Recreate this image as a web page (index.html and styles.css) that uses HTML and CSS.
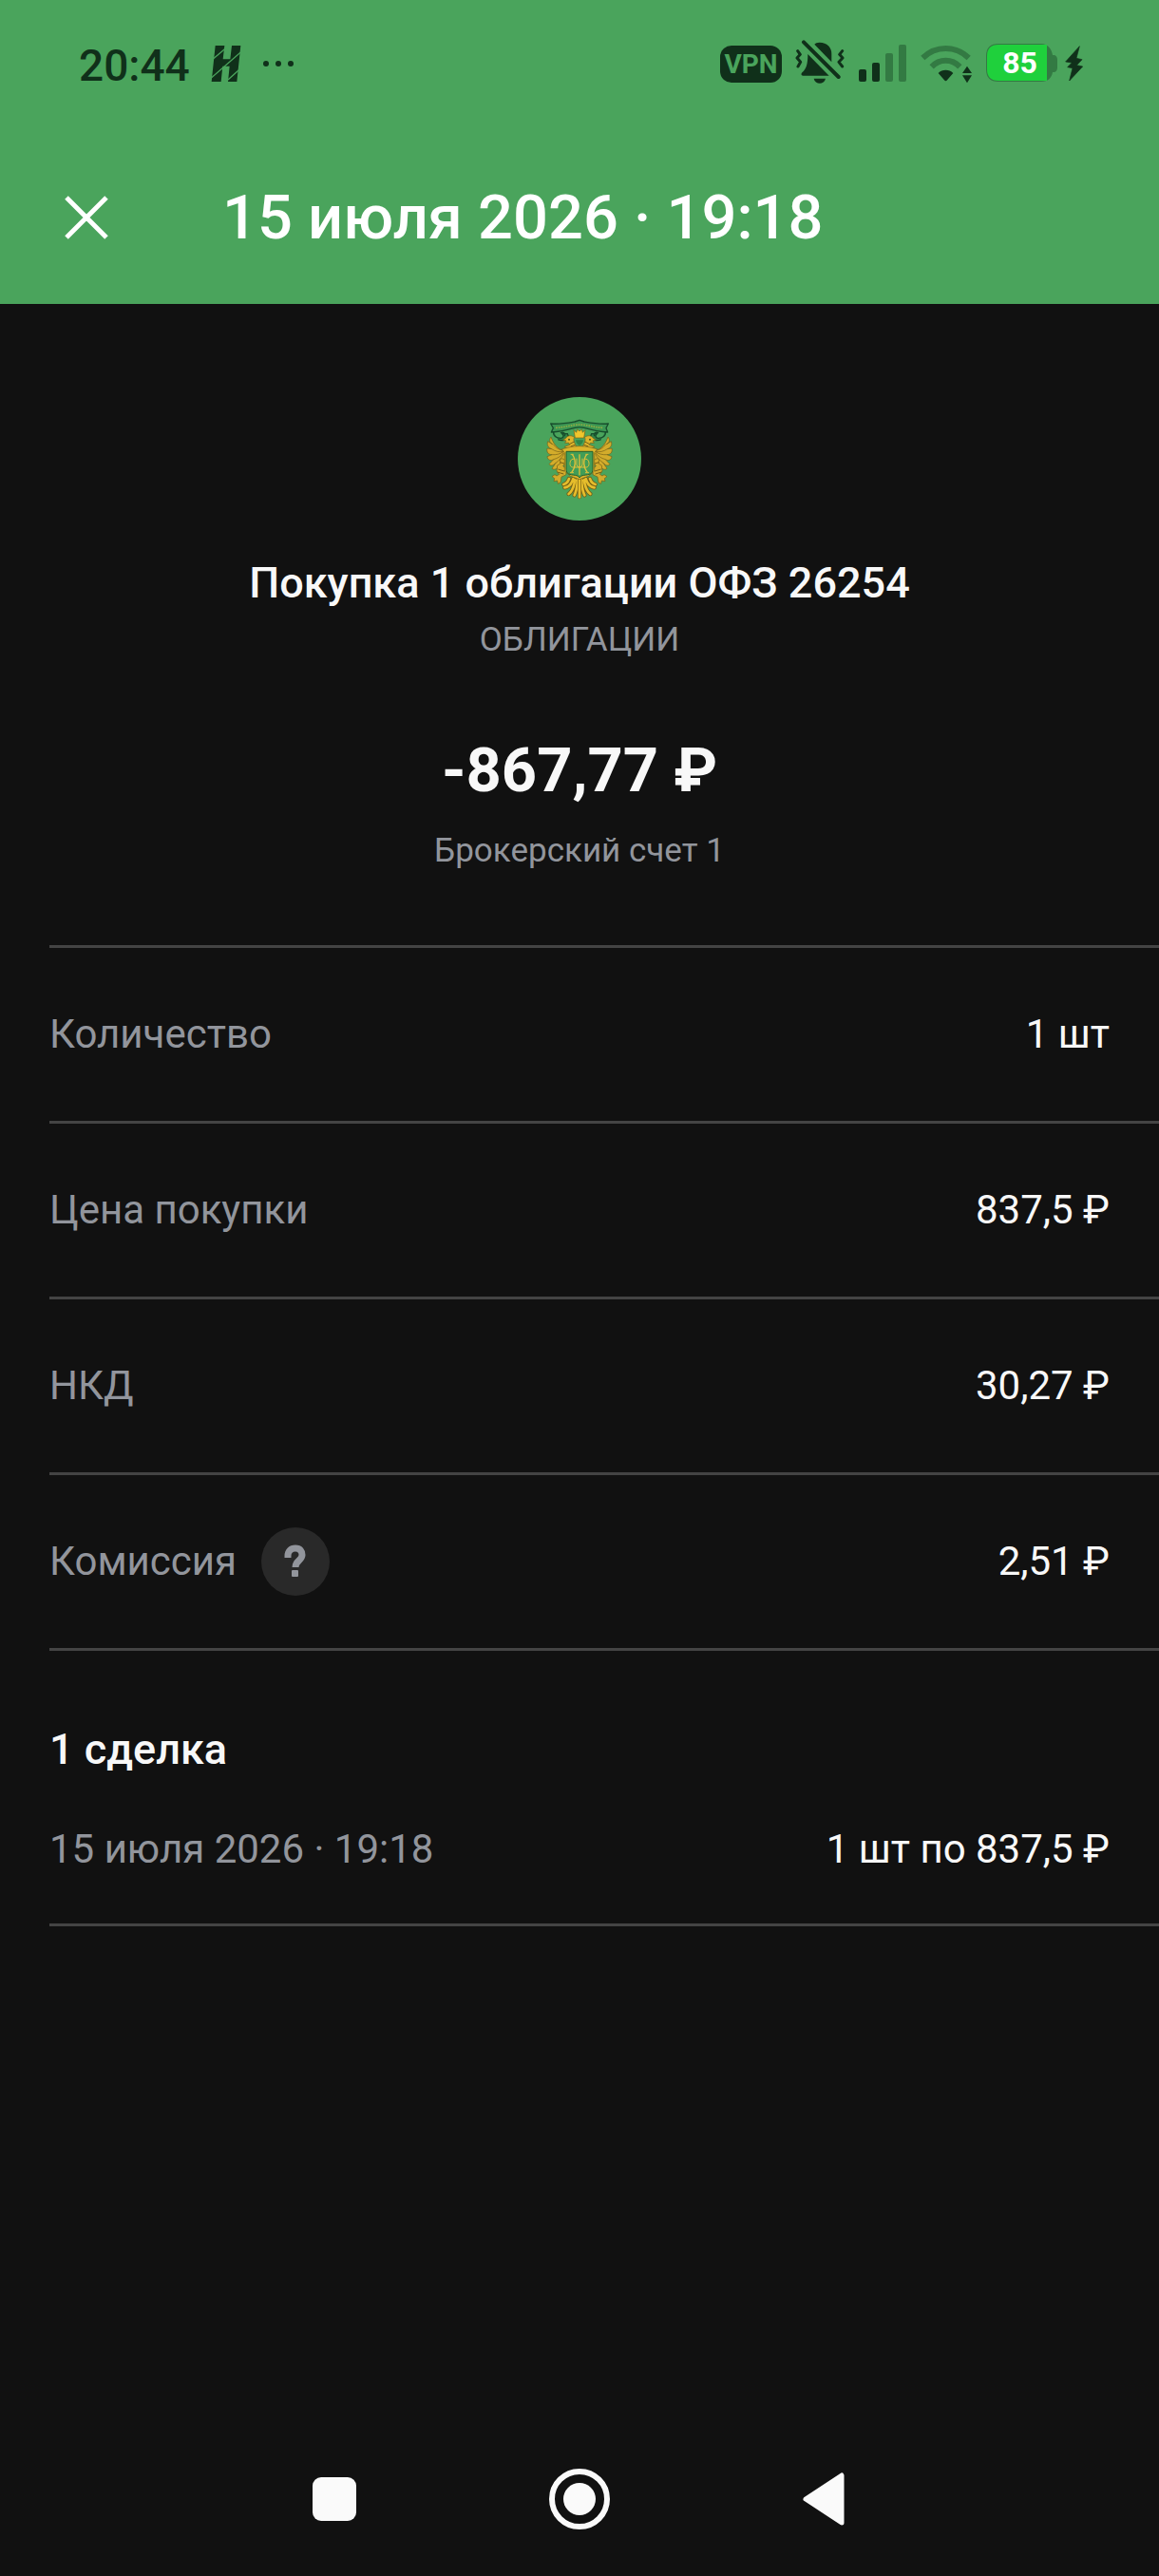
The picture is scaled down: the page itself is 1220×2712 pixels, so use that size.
FILE: index.html
```html
<!DOCTYPE html>
<html lang="ru">
<head>
<meta charset="utf-8">
<meta name="viewport" content="width=device-width, initial-scale=1">
<title>Операция</title>
<link rel="stylesheet" href="styles.css">
</head>
<body>
<header class="top">
  <div class="status">
    <div class="status-left">
      <span class="clock">20:44</span>
      <svg class="h-icon" viewBox="486 66 96 162" aria-hidden="true">
        <path fill="#10301a" d="M500 84h29l-5 43h23l5-43h28l-12 114h-28l5-49h-22l-5 49h-30z"/>
        <path stroke="#4aa45c" stroke-width="4" fill="none" d="M493 126l40-34M487 186l94-82M540 192l40-36"/>
      </svg>
      <svg class="dots" viewBox="0 0 34 54" aria-hidden="true"><g fill="#10301a"><circle cx="4" cy="25" r="3"/><circle cx="17" cy="25" r="3"/><circle cx="30" cy="25" r="3"/></g></svg>
    </div>
    <div class="status-right">
      <span class="vpn">VPN</span>
      <svg class="bell" viewBox="300 66 156 162" aria-hidden="true">
        <g fill="#10301a">
          <path d="M361 80c3-4 8-6 16-6 24 0 38 16 38 36v26z"/>
          <path d="M340 111l67 68h-82c-7 0-7-7-2-11 12-10 17-25 17-57z"/>
          <path d="M359 188h37c-4 20-33 20-37 0z"/>
        </g>
        <g fill="none" stroke="#10301a" stroke-linecap="round" stroke-linejoin="round">
          <path stroke-width="12" d="M327 73l110 110"/>
          <path stroke-width="9" d="M308 101l8 11-10 11 11 13-8 14M449 101l-9 11 10 11-12 13 11 14"/>
        </g>
      </svg>
      <svg class="signal" viewBox="906 42 52 54" aria-hidden="true">
        <g fill="#10301a"><rect x="907" y="73" width="8" height="13" rx="2"/><rect x="921" y="66" width="8" height="20" rx="2"/></g>
        <g fill="#337a43"><rect x="935" y="56" width="8" height="30" rx="2"/><rect x="949" y="47" width="8" height="39" rx="2"/></g>
      </svg>
      <svg class="wifi" viewBox="63 66 165 162" aria-hidden="true">
        <g fill="none" stroke="#337a43" stroke-width="18"><path d="M70 123c41-40 104-40 145 0"/><path d="M98 151c25-26 64-26 89 0"/></g>
        <g fill="#10301a"><path d="M119 171c12-13 35-13 47 0l-19 22c-3 4-6 4-9 0z"/><path d="M210 149l15 22h-30zM210 202l15-24h-30z"/></g>
      </svg>
      <div class="battery">
        <svg class="battery-shape" viewBox="0 0 76 54" aria-hidden="true">
          <path fill="#337a43" d="M13 4h45c7 0 11 6 12 12h2q3 1 3 5v8q0 4-3 5h-2c-1 6-5 10-12 10H13Q0 44 0 31V17Q0 4 13 4z"/>
          <path fill="#1fd03c" d="M13 5h51v38H13Q1 43 1 31V17Q1 5 13 5z"/>
        </svg>
        <span class="battery-level">85</span>
      </div>
      <svg class="bolt" viewBox="514 66 57 162" aria-hidden="true"><path fill="#10301a" stroke="#10301a" stroke-width="2" stroke-linejoin="round" d="M560 86l-44 49 20 3-14 14 16 3-10 40 42-45-19-4 17-18-18-4z"/></svg>
    </div>
  </div>
  <div class="appbar">
    <button class="close" type="button" aria-label="Закрыть"><svg viewBox="0 0 46 46"><path d="M2 2l42 42M44 2L2 44" stroke="#fff" stroke-width="5"/></svg></button>
    <h1 class="appbar-title">15 июля 2026 · 19:18</h1>
  </div>
</header>

<main>
  <section class="summary">
    <svg class="emblem" viewBox="45 54 390 390" aria-hidden="true">
      <defs>
        <g id="half">
          <!-- ribbon tail -->
          <path fill="#2f8548" stroke="#174d2c" stroke-width="4" d="M158 162c-2 14 8 22 23 22 10 0 10-12 3-14l18 0 4 10c-4 10-22 14-34 8M180 168c8-6 18 2 12 9"/>
          <!-- wing -->
          <g fill="#d3ac2b" stroke="#755f16" stroke-width="2">
            <path d="M150 180c-8 12-3 19 5 23l-15-9c-4 12 2 20 12 24l-14-2c-3 13 5 20 15 20l-15 6c2 12 12 14 20 9l-14 15c7 8 15 3 21-4l-12 18c10 7 18-1 21-10l-4 16c11 2 16-5 15-14l19-18v-28l-18-4c-18-6-29-22-36-42z"/>
            <path d="M157 203c10 14 20 18 34 20M152 218c12 8 24 11 38 8M153 236c14 1 26-2 36-9M158 251c14-4 24-10 31-21M165 262c12-8 20-18 26-30" fill="none"/>
          </g>
          <!-- head and neck -->
          <path fill="#ddb52c" stroke="#755f16" stroke-width="2" d="M232 216l-8-18c-4-10-2-14 0-16-8-8-22-8-27 2l-9 6 10 2-4 7 12 0 3 6-16 6 14 9z"/>
          <circle cx="207" cy="188" r="3" fill="#41551c"/>
          <path d="M208 203l15-8M212 210l14-5" stroke="#755f16" stroke-width="3"/>
          <!-- leg and claw -->
          <path fill="#d3ac2b" stroke="#755f16" stroke-width="2" d="M178 250c12-4 18 2 16 14l-6 8 12 12-3 16-14 6-3 18-8 4-2-10-11 2 2-9-8-6 9-6 6 4 8-5-8-10 2-18 10-6z"/>
          <path d="M172 282l20 6M170 291l20 6M178 260l14 4" stroke="#755f16" stroke-width="3"/>
          <!-- tail feathers -->
          <g fill="none" stroke-linecap="round">
            <path stroke="#755f16" stroke-width="13" d="M220 312c-5 18-12 26-27 28M226 316c-4 22-8 36-20 44M234 316c-2 26-5 38-10 48M207 312c-4 12-8 16-17 18"/>
            <path stroke="#e5bd2c" stroke-width="8" d="M220 312c-5 18-12 26-27 28M226 316c-4 22-8 36-20 44M234 316c-2 26-5 38-10 48M207 312c-4 12-8 16-17 18"/>
          </g>
        </g>
      </defs>
      <circle cx="240" cy="249" r="195" fill="#4aa45c"/>
      <use href="#half"/>
      <use href="#half" transform="matrix(-1 0 0 1 480 0)"/>
      <path fill="none" stroke="#755f16" stroke-width="12" stroke-linecap="round" d="M240 314v56"/>
      <path fill="none" stroke="#e5bd2c" stroke-width="8" stroke-linecap="round" d="M240 314v56"/>
      <path fill="#3c9653" stroke="#174d2c" stroke-width="4" stroke-linejoin="round" d="M149 138c28 3 54-2 76-6l15-5 15 5c22 4 48 9 76 6l-7 14 5 13c-30-2-53-8-75-14-9-2-19-2-28 0-22 6-45 12-75 14l6-13z"/>
      <path fill="none" stroke="#8dad43" stroke-width="5" stroke-dasharray="5 3" d="M165 151c28-1 48-9 75-10 27 1 47 9 75 10"/>
      <path fill="#efc62d" stroke="#755f16" stroke-width="2" d="M222 158l8 8 3-10 7 6 7-6 3 10 8-8-4 25h-28z"/>
      <path fill="#2f8548" d="M228 190h24q-2 13-12 17-10-4-12-17z"/>
      <path fill="#ddb52c" stroke="#755f16" stroke-width="2" d="M184 218c20-4 32-9 56-9s36 5 56 9l-9 12v58l-19 16-28 10-28-10-19-16v-58z"/>
      <path fill="#419d57" stroke="#235d2e" stroke-width="3" d="M198 226h84v57c0 15-12 16-28 18-7 1-12 4-14 8-2-4-7-7-14-8-16-2-28-3-28-18z"/>
      <g fill="none" stroke="#dfc13b">
        <path stroke-width="4" d="M240 235v66M217 235c13 17 11 42-2 57M263 235c-13 17-11 42 2 57"/>
        <path stroke-width="3" d="M210 293h12M258 293h12M212 235h9M259 235h9M224 250c-17-5-19 27-4 26h40c15 1 13-31-4-26M231 248v19q0 8 9 9 9-1 9-9v-19"/>
      </g>
    </svg>
    <h2 class="summary-title">Покупка 1 облигации ОФЗ 26254</h2>
    <p class="caption kind">ОБЛИГАЦИИ</p>
    <p class="amount">-867,77 ₽</p>
    <p class="caption">Брокерский счет 1</p>
  </section>

  <dl class="details">
    <div class="row"><dt>Количество</dt><dd>1 шт</dd></div>
    <div class="row"><dt>Цена покупки</dt><dd>837,5 ₽</dd></div>
    <div class="row"><dt>НКД</dt><dd>30,27 ₽</dd></div>
    <div class="row">
      <dt>Комиссия
        <button class="help" type="button" aria-label="О комиссии"><svg viewBox="0 0 72 72"><path d="M28 32v-2c0-5 3-8 8-8s7 3 7 7c0 6-7 6-7 13" fill="none" stroke="#92959c" stroke-width="7"/><rect x="32" y="45" width="7" height="7" rx="1" fill="#92959c"/></svg></button>
      </dt>
      <dd>2,51 ₽</dd>
    </div>
  </dl>

  <section class="deals">
    <h2 class="deals-title">1 сделка</h2>
    <div class="deal"><span class="muted">15 июля 2026 · 19:18</span><span>1 шт по 837,5 ₽</span></div>
  </section>
</main>

<nav class="system-nav" aria-label="Системная навигация">
  <button type="button" aria-label="Недавние"><svg viewBox="0 0 64 64"><rect x="9" y="9" width="46" height="46" rx="9" fill="#fafafa"/></svg></button>
  <button type="button" aria-label="Домой"><svg viewBox="0 0 64 64"><circle cx="32" cy="32" r="29" fill="none" stroke="#fafafa" stroke-width="6"/><circle cx="32" cy="32" r="17" fill="#fafafa"/></svg></button>
  <button type="button" aria-label="Назад"><svg viewBox="0 0 64 64"><path d="M12 32L50 7v50z" fill="#fafafa" stroke="#fafafa" stroke-width="5" stroke-linejoin="round"/></svg></button>
</nav>
</body>
</html>
```
FILE: styles.css
```css
* {
  box-sizing: border-box;
}

body {
  margin: 0;
  min-height: 100vh;
  display: flex;
  flex-direction: column;
  background: #111;
  color: #f8f8f8;
  font: 400 42px/50px Roboto, "Noto Sans", sans-serif;
}

h1, h2, p, dl, dd {
  margin: 0;
}

svg {
  display: block;
}

button {
  padding: 0;
  border: 0;
  background: none;
  cursor: pointer;
}

/* Header */
.top {
  background: #4aa45c;
  color: #fff;
}

.status {
  height: 138px;
  padding: 0 80px 0 83px;
  display: flex;
  align-items: center;
  justify-content: space-between;
  color: #10301a;
}

.status-left,
.status-right {
  display: flex;
  align-items: center;
}

.status-left {
  gap: 22px;
}

.status-right {
  gap: 14px;
}

.clock {
  font-size: 46px;
  font-weight: 500;
  line-height: 54px;
}

.h-icon {
  width: 32px;
  height: 54px;
}

.dots {
  width: 34px;
  height: 54px;
}

.vpn {
  height: 39px;
  width: 65px;
  margin-bottom: 4px;
  border-radius: 12px;
  background: #10301a;
  color: #4aa45c;
  font-size: 28px;
  font-weight: 700;
  line-height: 39px;
  text-align: center;
}

.bell {
  width: 52px;
  height: 54px;
}

.signal {
  width: 52px;
  height: 54px;
}

.wifi {
  width: 55px;
  height: 54px;
}

.battery {
  position: relative;
  width: 76px;
  height: 54px;
  margin-right: -7px;
}

.battery-shape {
  width: 76px;
  height: 54px;
}

.battery-level {
  position: absolute;
  top: 4px;
  left: 0;
  width: 71px;
  color: #fff;
  font-size: 32px;
  font-weight: 700;
  line-height: 40px;
  text-align: center;
}

.bolt {
  width: 19px;
  height: 54px;
}

.appbar {
  height: 182px;
  padding: 0 52px;
  display: flex;
  align-items: center;
  gap: 104px;
}

.close {
  width: 78px;
  height: 78px;
  display: grid;
  place-items: center;
}

.close svg {
  width: 46px;
  height: 46px;
}

.appbar-title {
  font-size: 65px;
  font-weight: 500;
  line-height: 76px;
}

/* Operation summary */
.summary {
  padding: 98px 52px 77px;
  display: flex;
  flex-direction: column;
  align-items: center;
  text-align: center;
}

.emblem {
  width: 130px;
  height: 130px;
  margin-bottom: 39px;
}

.summary-title,
.deals-title {
  font-size: 45px;
  font-weight: 500;
  line-height: 54px;
}

.caption {
  color: #92959c;
  font-size: 35px;
  line-height: 44px;
}

.kind {
  margin-top: 11px;
}

.amount {
  margin: 77px 0 25px;
  font-size: 65px;
  font-weight: 700;
  line-height: 76px;
}

/* Details */
.row {
  height: 185px;
  margin-left: 52px;
  padding-right: 52px;
  border-top: 3px solid #444;
  display: flex;
  align-items: center;
  justify-content: space-between;
}

.row dt {
  display: flex;
  align-items: center;
  gap: 26px;
}

.row dt,
.muted {
  color: #92959c;
}

.help {
  width: 72px;
  height: 72px;
  border-radius: 50%;
  background: #292929;
}

.deals {
  margin-left: 52px;
  padding: 77px 52px 53px 0;
  border-top: 3px solid #444;
  border-bottom: 3px solid #444;
}

.deal {
  margin-top: 53px;
  display: flex;
  justify-content: space-between;
}

/* System navigation */
.system-nav {
  height: 162px;
  margin-top: auto;
  display: flex;
  align-items: center;
  justify-content: center;
  gap: 194px;
}

.system-nav svg {
  width: 64px;
  height: 64px;
}
```
